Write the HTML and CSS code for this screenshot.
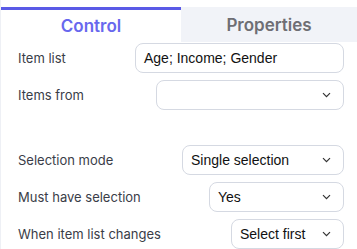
FILE: index.html
```html
<!DOCTYPE html>
<html lang="en">
<head>
  <meta charset="UTF-8" />
  <title>Control panel</title>
  <link rel="stylesheet" href="styles.css">
</head>
<body>

<div class="panel">
  <div class="tabs">
    <div class="tab active">Control</div>
    <div class="tab">Properties</div>
  </div>

  <div class="form">
    <div class="row">
      <span class="label">Item list</span>
      <div class="field input w-list">Age; Income; Gender</div>
    </div>

    <div class="row">
      <span class="label">Items from</span>
      <div class="field select w-from">
        <span></span>
        <svg class="chev" width="9" height="6" viewBox="0 0 9 6"><path d="M1 1.2l3.5 3.5 3.5-3.5" fill="none" stroke="#333" stroke-width="1.2"/></svg>
      </div>
    </div>

    <div class="spacer"></div>

    <div class="row">
      <span class="label">Selection mode</span>
      <div class="field select w-mode">
        <span>Single selection</span>
        <svg class="chev" width="9" height="6" viewBox="0 0 9 6"><path d="M1 1.2l3.5 3.5 3.5-3.5" fill="none" stroke="#333" stroke-width="1.2"/></svg>
      </div>
    </div>

    <div class="row">
      <span class="label">Must have selection</span>
      <div class="field select w-must">
        <span>Yes</span>
        <svg class="chev" width="9" height="6" viewBox="0 0 9 6"><path d="M1 1.2l3.5 3.5 3.5-3.5" fill="none" stroke="#333" stroke-width="1.2"/></svg>
      </div>
    </div>

    <div class="row">
      <span class="label">When item list changes</span>
      <div class="field select w-change">
        <span>Select first</span>
        <svg class="chev" width="9" height="6" viewBox="0 0 9 6"><path d="M1 1.2l3.5 3.5 3.5-3.5" fill="none" stroke="#333" stroke-width="1.2"/></svg>
      </div>
    </div>
  </div>
</div>

</body>
</html>
```

FILE: styles.css
```css
body {
  margin: 0;
  padding: 0;
  background: white;
  font-family: Inter, "Noto Sans", sans-serif;
}

.panel {
  border-left: 1px solid #eef0f5;
  height: 100vh;
  box-sizing: border-box;
  padding-top: 7px;
}

.tabs {
  display: flex;
  height: 35px;
}

.tab {
  flex: 1;
  display: flex;
  align-items: center;
  justify-content: center;
  background: #f1f3f8;
  color: #6e6e74;
  font-size: 17px;
  font-weight: 600;
}

.tab.active {
  flex: 0 0 180px;
  background: white;
  color: #6868ee;
  border-top: 3px solid #5a5ae6;
  box-sizing: border-box;
}

.form {
  padding: 1px 13px 0 17px;
}

.row {
  display: flex;
  align-items: center;
  justify-content: space-between;
  margin-bottom: 7px;
}

.label {
  font-size: 13px;
  color: #3a3d48;
}

.field {
  height: 30px;
  box-sizing: border-box;
  border: 1px solid #d5d9e2;
  border-radius: 8px;
  display: flex;
  align-items: center;
  padding: 0 8px;
  font-family: "Liberation Sans", Arial, sans-serif;
  font-size: 14px;
  color: #111;
}

.select {
  justify-content: space-between;
  padding-right: 12px;
}

.chev {
  flex: none;
}

.spacer {
  height: 28px;
}

.w-list { width: 209px; }
.w-from { width: 188px; }
.w-mode { width: 162px; }
.w-must { width: 135px; }
.w-change { width: 113px; }
```
